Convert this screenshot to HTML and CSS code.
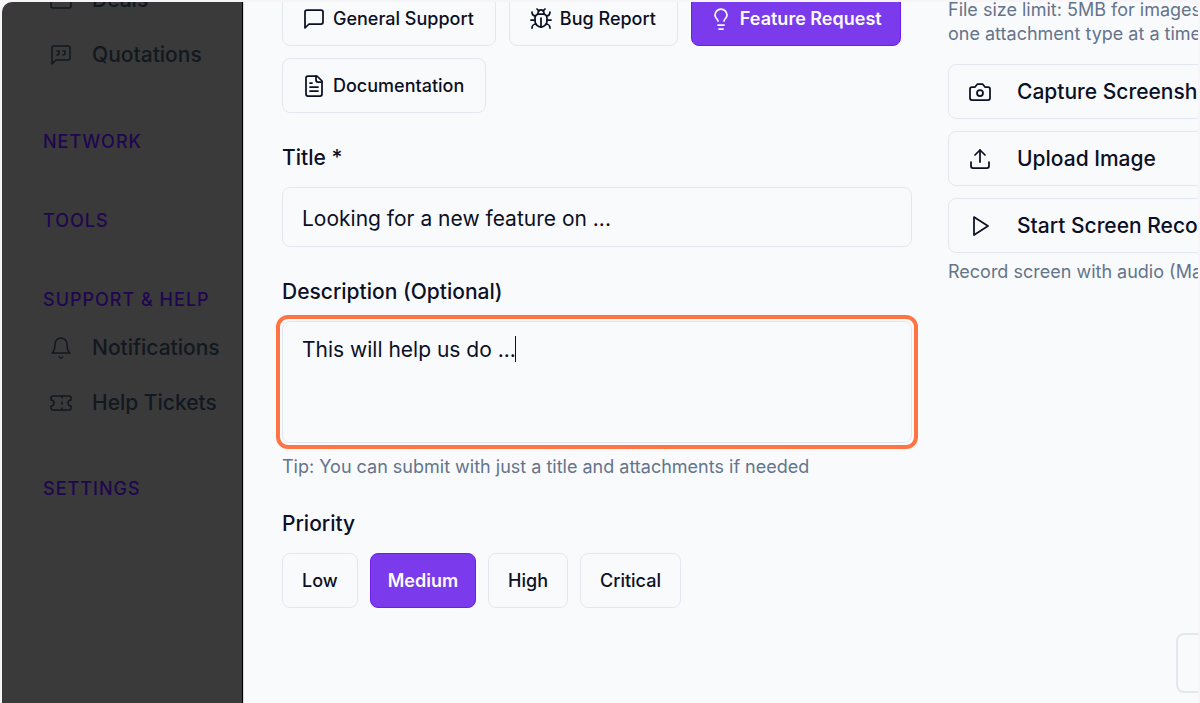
FILE: index.html
```html
<!DOCTYPE html>
<html lang="en">
<head>
<meta charset="UTF-8">
<meta name="viewport" content="width=device-width, initial-scale=1.0">
<title>Help Tickets</title>
<link rel="stylesheet" href="styles.css">
</head>
<body>

<div class="app">
    <nav class="sidebar">
        <div class="nav-section">
            <a class="nav-item" href="#">
                <svg class="icon" viewBox="0 0 24 24"><rect x="2" y="6" width="20" height="14" rx="2"/><path d="M16 6V4a2 2 0 0 0-2-2h-4a2 2 0 0 0-2 2v2"/></svg>
                Deals
            </a>
            <a class="nav-item" href="#">
                <svg class="icon" viewBox="0 0 24 24"><path d="M21 15a2 2 0 0 1-2 2H7l-4 4V5a2 2 0 0 1 2-2h14a2 2 0 0 1 2 2z"/><path d="M8 12a2 2 0 0 0 2-2V8H8"/><path d="M14 12a2 2 0 0 0 2-2V8h-2"/></svg>
                Quotations
            </a>
        </div>
        <div class="nav-section">
            <h2>NETWORK</h2>
        </div>
        <div class="nav-section">
            <h2>TOOLS</h2>
        </div>
        <div class="nav-section">
            <h2>SUPPORT &amp; HELP</h2>
            <a class="nav-item" href="#">
                <svg class="icon" viewBox="0 0 24 24"><path d="M6 8a6 6 0 0 1 12 0c0 7 3 9 3 9H3s3-2 3-9"/><path d="M10.3 21a1.94 1.94 0 0 0 3.4 0"/></svg>
                Notifications
            </a>
            <a class="nav-item" href="#">
                <svg class="icon" viewBox="0 0 24 24"><path d="M2 9a3 3 0 0 1 0 6v2a2 2 0 0 0 2 2h16a2 2 0 0 0 2-2v-2a3 3 0 0 1 0-6V7a2 2 0 0 0-2-2H4a2 2 0 0 0-2 2Z"/><path d="M13 5v2"/><path d="M13 17v2"/><path d="M13 11v2"/></svg>
                Help Tickets
            </a>
        </div>
        <div class="nav-section">
            <h2>SETTINGS</h2>
        </div>
    </nav>

    <main class="panel">
        <form class="ticket-form">
            <div class="details">
                <div class="options types">
                    <button type="button" class="option">
                        <svg class="icon" viewBox="0 0 24 24"><path d="M21 15a2 2 0 0 1-2 2H7l-4 4V5a2 2 0 0 1 2-2h14a2 2 0 0 1 2 2z"/></svg>
                        General Support
                    </button>
                    <button type="button" class="option">
                        <svg class="icon" viewBox="0 0 24 24"><path d="m8 2 1.88 1.88"/><path d="M14.12 3.88 16 2"/><path d="M9 7.13v-1a3.003 3.003 0 1 1 6 0v1"/><path d="M12 20c-3.3 0-6-2.7-6-6v-3a4 4 0 0 1 4-4h4a4 4 0 0 1 4 4v3c0 3.3-2.7 6-6 6"/><path d="M12 20v-9"/><path d="M6.53 9C4.6 8.8 3 7.1 3 5"/><path d="M6 13H2"/><path d="M3 21c0-2.1 1.7-3.9 3.8-4"/><path d="M20.97 5c0 2.1-1.6 3.8-3.5 4"/><path d="M22 13h-4"/><path d="M17.2 17c2.1.1 3.8 1.9 3.8 4"/></svg>
                        Bug Report
                    </button>
                    <button type="button" class="option active">
                        <svg class="icon" viewBox="0 0 24 24"><path d="M15 14c.2-1 .7-1.7 1.5-2.5 1-.9 1.5-2.2 1.5-3.5A6 6 0 0 0 6 8c0 1 .2 2.2 1.5 3.5.7.7 1.3 1.5 1.5 2.5"/><path d="M9 18h6"/><path d="M10 22h4"/></svg>
                        Feature Request
                    </button>
                    <button type="button" class="option">
                        <svg class="icon" viewBox="0 0 24 24"><path d="M15 2H6a2 2 0 0 0-2 2v16a2 2 0 0 0 2 2h12a2 2 0 0 0 2-2V7Z"/><path d="M14 2v4a2 2 0 0 0 2 2h4"/><path d="M10 9H8"/><path d="M16 13H8"/><path d="M16 17H8"/></svg>
                        Documentation
                    </button>
                </div>

                <div class="field">
                    <label for="title">Title *</label>
                    <input type="text" id="title" value="Looking for a new feature on ...">
                </div>

                <div class="field">
                    <label for="description">Description (Optional)</label>
                    <div class="highlight">
                        <textarea id="description">This will help us do ...</textarea>
                        <span class="caret"></span>
                    </div>
                    <p class="hint">Tip: You can submit with just a title and attachments if needed</p>
                </div>

                <div class="field" role="group" aria-labelledby="priority">
                    <span class="label" id="priority">Priority</span>
                    <div class="options">
                        <button type="button" class="option">Low</button>
                        <button type="button" class="option active">Medium</button>
                        <button type="button" class="option">High</button>
                        <button type="button" class="option">Critical</button>
                    </div>
                </div>
            </div>

            <div class="attachments">
                <p class="hint">File size limit: 5MB for images<br>one attachment type at a time</p>
                <button type="button" class="attach">
                    <svg class="icon" viewBox="0 0 24 24"><path d="M14.5 4h-5L7 7H4a2 2 0 0 0-2 2v9a2 2 0 0 0 2 2h16a2 2 0 0 0 2-2V9a2 2 0 0 0-2-2h-3z"/><circle cx="12" cy="13" r="3"/></svg>
                    Capture Screenshot
                </button>
                <button type="button" class="attach">
                    <svg class="icon" viewBox="0 0 24 24"><path d="M21 15v4a2 2 0 0 1-2 2H5a2 2 0 0 1-2-2v-4"/><path d="m17 8-5-5-5 5"/><path d="M12 3v12"/></svg>
                    Upload Image
                </button>
                <button type="button" class="attach">
                    <svg class="icon" viewBox="0 0 24 24"><path d="m6 3 14 9-14 9V3z"/></svg>
                    Start Screen Recording
                </button>
                <p class="hint">Record screen with audio (Max</p>
            </div>
        </form>

        <footer class="actions">
            <button type="button" class="cancel" aria-label="Cancel"></button>
        </footer>
    </main>
</div>

</body>
</html>
```

FILE: styles.css
```css
* {
    box-sizing: border-box;
}

body {
    margin: 0;
    height: 100vh;
    padding: 2px 2px 0;
    overflow: hidden;
    background-color: #f8f5f9;
    color: #0b1024;
    font-family: Inter, sans-serif;
    font-size: 21px;
}

button, input, textarea {
    font-family: inherit;
    color: inherit;
}

.app {
    display: flex;
    height: 100%;
    overflow: hidden;
    border-radius: 10px 10px 0 0;
    background-color: #f9fafc;
}

.icon {
    flex: none;
    width: 24px;
    height: 24px;
    fill: none;
    stroke: currentColor;
    stroke-width: 1.75;
    stroke-linecap: round;
    stroke-linejoin: round;
}

/* Sidebar */
.sidebar {
    flex: none;
    width: 241px;
    background-color: #3a3a3a;
    border-right: 1px solid #000;
    padding-left: 41px;
}

.nav-section {
    padding-bottom: 47px;
}

.nav-section:first-child {
    margin-top: -30px;
    padding-bottom: 48px;
}

.nav-section h2 {
    margin: 0 0 8px;
    color: #1f0650;
    font-size: 18px;
    font-weight: 500;
    line-height: 24px;
    letter-spacing: 1px;
}

.nav-item {
    display: flex;
    align-items: center;
    gap: 19px;
    height: 55px;
    padding-left: 6px;
    color: #12181f;
    font-weight: 500;
    text-decoration: none;
}

.nav-item .icon {
    stroke-width: 1.5;
}

/* Ticket form */
.panel {
    flex: 1;
    min-width: 0;
    border-left: 1px solid #d5dae3;
    padding-left: 38px;
}

.ticket-form {
    display: grid;
    grid-template-columns: 63fr 25fr;
    gap: 36px;
    margin-top: -11px;
}

.details, .attachments {
    min-width: 0;
}

.options {
    display: flex;
    flex-wrap: wrap;
    gap: 12px;
}

.types {
    column-gap: 13px;
    margin-bottom: 31px;
}

.option {
    display: flex;
    align-items: center;
    gap: 7px;
    height: 55px;
    padding: 0 19px;
    background-color: #f9fafc;
    border: 1px solid #e3e8f0;
    border-radius: 8px;
    font-size: 18px;
    font-weight: 500;
}

.types .option {
    padding: 0 21px 0 19px;
}

.option.active {
    padding: 0 17px;
    background-color: #7c3aed;
    border-color: #6d1ee8;
    color: #f9fafc;
    font-weight: 600;
}

.types .option.active {
    padding: 0 18px 0 17px;
}

.field {
    margin-bottom: 31px;
}

.field:last-child {
    margin-bottom: 25px;
}

.field label, .field .label {
    display: block;
    margin-bottom: 15px;
    font-weight: 500;
    line-height: 28px;
}

.field input, .field textarea {
    display: block;
    width: 100%;
    padding: 2px 19px 0;
    background-color: #f9fafc;
    border: 1px solid #e3e8f0;
    border-radius: 8px;
    font-size: 21px;
    outline: none;
}

.field input {
    height: 60px;
}

.field textarea {
    height: 122px;
    padding-top: 14px;
    line-height: 28px;
    resize: none;
}

.highlight {
    position: relative;
    margin: -6px -6px 6px;
    padding: 2px;
    border: 4px solid #ff7442;
    border-radius: 12px;
}

.caret {
    position: absolute;
    top: 17px;
    left: 235px;
    width: 1px;
    height: 26px;
    background-color: #0b1024;
}

.hint {
    margin: 0;
    color: #64748b;
    font-size: 18px;
    line-height: 24px;
}

/* Attachments */
.attachments {
    white-space: nowrap;
    padding-top: 7px;
}

.attachments .hint:first-child {
    margin-bottom: 18px;
}

.attach {
    display: flex;
    align-items: center;
    gap: 25px;
    width: 150%;
    height: 55px;
    margin-bottom: 12px;
    padding: 0 19px;
    background-color: #f9fafc;
    border: 1px solid #e3e8f0;
    border-radius: 8px;
    font-size: 21px;
    font-weight: 500;
}

.attach:last-of-type {
    margin-bottom: 7px;
}

.actions {
    display: flex;
    justify-content: flex-end;
    margin-right: -98px;
}

.cancel {
    width: 120px;
    height: 60px;
    background-color: #f9fafc;
    border: 2px solid #e3e8f0;
    border-radius: 8px;
}
```
